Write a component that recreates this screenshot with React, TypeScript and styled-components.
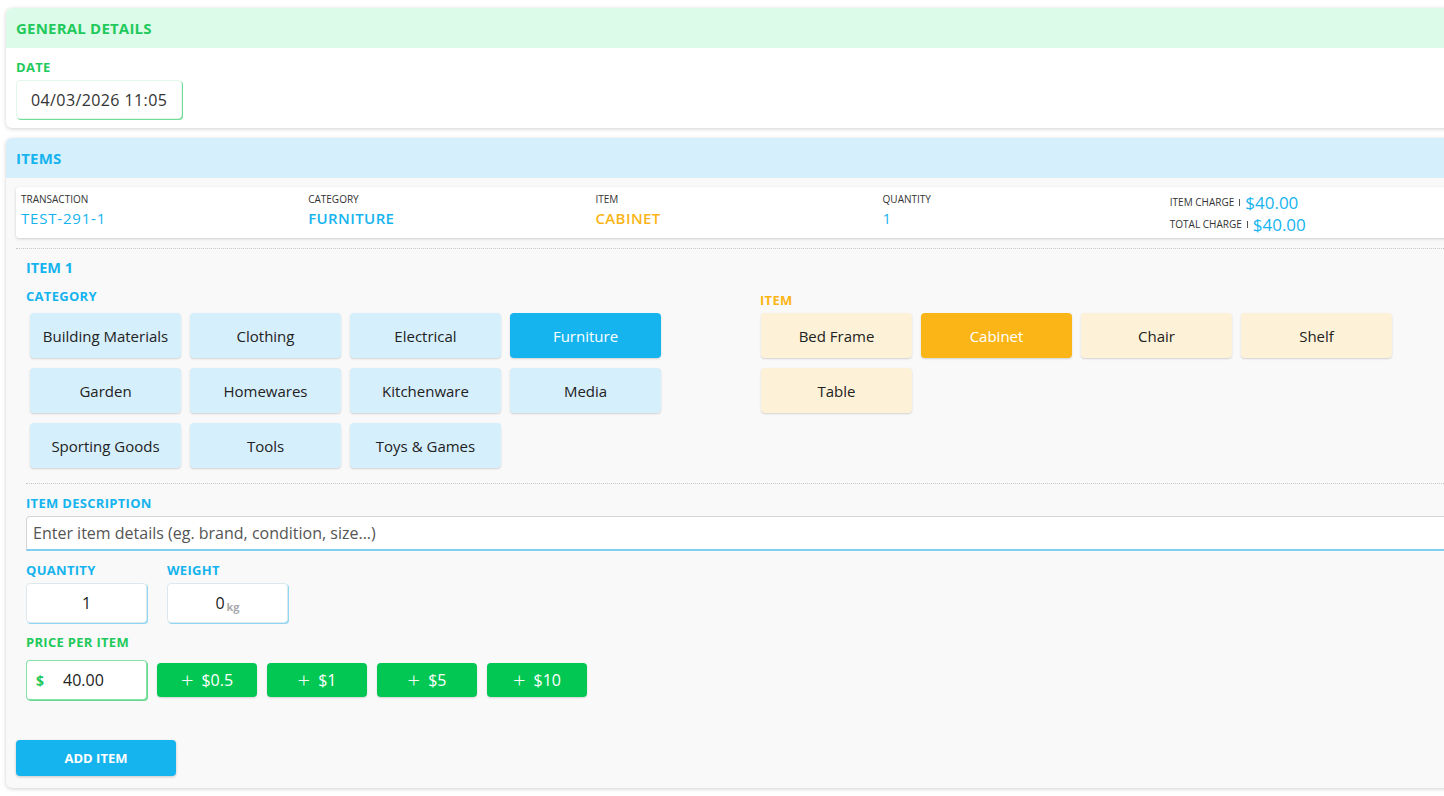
import React from "react";
import styled, { createGlobalStyle } from "styled-components";

const GREEN = "#1fc95b";
const BLUE = "#15b4ef";
const ORANGE = "#fbb516";
const FONT = `"Open Sans", "Noto Sans", sans-serif`;

const Global = createGlobalStyle`
  html, body { margin: 0; padding: 0; background: #fff; overflow: hidden; }
  body { font-family: ${FONT}; color: #222; }
  * { box-sizing: border-box; }
`;

const Page = styled.div`
  width: 1472px;
  padding: 8px 0 8px 6px;
  display: flex;
  flex-direction: column;
  gap: 10px;
`;

const Card = styled.section<{ $bg?: string }>`
  width: 1466px;
  background: ${(p) => p.$bg || "#fff"};
  border-radius: 6px;
  box-shadow: 0 1px 4px rgba(0, 0, 0, 0.18);
  overflow: hidden;
`;

const CardHeader = styled.div<{ $bg: string; $color: string }>`
  height: 40px;
  background: ${(p) => p.$bg};
  color: ${(p) => p.$color};
  display: flex;
  align-items: center;
  padding: 0 10px;
  font-size: 15px;
  font-weight: 700;
  letter-spacing: 0.2px;
`;

const CardBody = styled.div`
  padding: 10px 10px 9px;
`;

const Label = styled.div<{ $color: string; $mt?: number }>`
  color: ${(p) => p.$color};
  font-size: 13px;
  font-weight: 700;
  line-height: 18px;
  letter-spacing: 0.3px;
  text-transform: uppercase;
  margin-top: ${(p) => p.$mt || 0}px;
`;

const DateBox = styled.div`
  margin-top: 4px;
  width: 166px;
  height: 39px;
  display: flex;
  align-items: center;
  padding-left: 14px;
  font-size: 16px;
  letter-spacing: 0.4px;
  color: #333;
  background: #fff;
  border: 1px solid #e2f7e9;
  border-radius: 4px;
  box-shadow: 1px 1px 0 ${GREEN}a0;
`;

const ItemsBody = styled.div`
  padding: 9px 10px 12px;
  display: flex;
  flex-direction: column;
`;

const Summary = styled.div`
  background: #fff;
  border-radius: 3px;
  box-shadow: 0 1px 3px rgba(0, 0, 0, 0.18);
  display: grid;
  grid-template-columns: repeat(5, 1fr);
  padding: 6px 5px 0;
  height: 51px;
  margin-bottom: 10px;
`;

const SumCol = styled.div`
  display: flex;
  flex-direction: column;
  gap: 1px;
`;

const ChargeCol = styled.div`
  display: flex;
  flex-direction: column;
  margin-top: -2px;
`;

const SumLabel = styled.div`
  font-size: 10px;
  color: #333;
  text-transform: uppercase;
  line-height: 12px;
`;

const SumValue = styled.div<{ $color: string; $bold?: boolean }>`
  font-size: 15px;
  color: ${(p) => p.$color};
  font-weight: ${(p) => (p.$bold ? 600 : 400)};
  line-height: 24px;
  letter-spacing: ${(p) => (p.$bold ? 0.4 : 0.8)}px;
`;

const ChargeRow = styled.div`
  display: flex;
  align-items: center;
  gap: 4px;
  height: 22px;
  font-size: 10px;
  color: #333;
  text-transform: uppercase;
`;

const ChargeSep = styled.span`
  display: inline-block;
  width: 1px;
  height: 7px;
  background: #555;
  margin: 0 1px;
`;

const ChargeVal = styled.span`
  font-size: 17px;
  color: ${BLUE};
`;

const Dotted = styled.div`
  border-top: 1px dotted #c8c8c8;
`;

const ItemSection = styled.div`
  padding: 9px 10px 0;
  display: flex;
  flex-direction: column;
`;

const ItemTitle = styled.div`
  color: ${BLUE};
  font-size: 14.5px;
  font-weight: 700;
  line-height: 20px;
`;

const Pickers = styled.div`
  display: grid;
  grid-template-columns: 734px 1fr;
  margin-top: 9px;
  padding-bottom: 15px;
`;

const PickCol = styled.div<{ $offset?: number }>`
  display: flex;
  flex-direction: column;
  padding-top: ${(p) => p.$offset || 0}px;
`;

const BtnGrid = styled.div<{ $mt: number; $pl: number }>`
  display: grid;
  grid-template-columns: repeat(4, 151px);
  gap: 10px 9px;
  margin-top: ${(p) => p.$mt}px;
  padding-left: ${(p) => p.$pl}px;
`;

const Choice = styled.button<{ $bg: string; $active: boolean; $activeBg: string }>`
  height: 45px;
  border: none;
  border-radius: 4px;
  font-family: ${FONT};
  font-size: 15px;
  background: ${(p) => (p.$active ? p.$activeBg : p.$bg)};
  color: ${(p) => (p.$active ? "#fff" : "#222")};
  box-shadow: 0 1px 2px rgba(0, 0, 0, 0.16);
  cursor: pointer;
  padding: 0;
`;

const Field = styled.div<{ $mt?: number }>`
  display: flex;
  flex-direction: column;
  margin-top: ${(p) => p.$mt || 0}px;
`;

const DescInput = styled.input`
  margin-top: 4px;
  width: 100%;
  height: 35px;
  border: 1px solid #d4d4d4;
  border-bottom: 2px solid #7fcff0;
  border-radius: 4px 4px 0 0;
  padding: 0 6px;
  font-family: ${FONT};
  font-size: 16px;
  color: #444;
  background: #fff;
  &::placeholder { color: #555; }
`;

const Row = styled.div<{ $gap: number; $mt?: number }>`
  display: flex;
  gap: ${(p) => p.$gap}px;
  margin-top: ${(p) => p.$mt || 0}px;
  align-items: flex-start;
`;

const NumBox = styled.div<{ $accent: string; $justify?: string }>`
  margin-top: 4px;
  width: 121px;
  height: 40px;
  background: #fff;
  border: 1px solid #dde8ee;
  border-radius: 4px;
  box-shadow: 1px 1px 0 ${(p) => p.$accent};
  display: flex;
  align-items: center;
  justify-content: ${(p) => p.$justify || "center"};
  font-size: 16px;
  color: #222;
  gap: 2px;
`;

const Unit = styled.span`
  font-size: 11px;
  font-weight: 700;
  color: #aaa;
  margin-top: 6px;
`;

const PriceBox = styled(NumBox)`
  margin-top: 0;
  border-color: ${GREEN}88;
  padding-left: 9px;
  gap: 0;
`;

const Dollar = styled.span`
  color: ${GREEN};
  font-weight: 700;
  font-size: 14px;
  width: 27px;
`;

const AddBtn = styled.button`
  margin-top: 3px;
  width: 100px;
  height: 34px;
  border: none;
  border-radius: 4px;
  background: #02c853;
  color: #fff;
  font-family: ${FONT};
  font-size: 16px;
  display: flex;
  align-items: center;
  justify-content: center;
  gap: 8px;
  box-shadow: 0 1px 2px rgba(0, 0, 0, 0.15);
  padding: 0;
`;

const Plus = styled.span`
  font-size: 22px;
  font-weight: 300;
  line-height: 1;
  margin-top: -3px;
`;

const Primary = styled.button`
  margin-top: 40px;
  width: 160px;
  height: 36px;
  border: none;
  border-radius: 4px;
  background: ${BLUE};
  color: #fff;
  font-family: ${FONT};
  font-weight: 700;
  font-size: 13px;
  box-shadow: 0 1px 3px rgba(0, 0, 0, 0.2);
`;

const categories = [
  "Building Materials", "Clothing", "Electrical", "Furniture",
  "Garden", "Homewares", "Kitchenware", "Media",
  "Sporting Goods", "Tools", "Toys & Games",
];
const items = ["Bed Frame", "Cabinet", "Chair", "Shelf", "Table"];

export default function App() {
  return (
    <>
      <Global />
      <Page>
        <Card>
          <CardHeader $bg="#dcfbe8" $color={GREEN}>GENERAL DETAILS</CardHeader>
          <CardBody>
            <Label $color={GREEN}>Date</Label>
            <DateBox>04/03/2026 11:05</DateBox>
          </CardBody>
        </Card>

        <Card $bg="#f9f9f9">
          <CardHeader $bg="#d6effc" $color={BLUE}>ITEMS</CardHeader>
          <ItemsBody>
            <Summary>
              <SumCol>
                <SumLabel>Transaction</SumLabel>
                <SumValue $color={BLUE}>TEST-291-1</SumValue>
              </SumCol>
              <SumCol>
                <SumLabel>Category</SumLabel>
                <SumValue $color={BLUE} $bold>FURNITURE</SumValue>
              </SumCol>
              <SumCol>
                <SumLabel>Item</SumLabel>
                <SumValue $color={ORANGE} $bold>CABINET</SumValue>
              </SumCol>
              <SumCol>
                <SumLabel>Quantity</SumLabel>
                <SumValue $color={BLUE}>1</SumValue>
              </SumCol>
              <ChargeCol>
                <ChargeRow>Item charge <ChargeSep /> <ChargeVal>$40.00</ChargeVal></ChargeRow>
                <ChargeRow>Total charge <ChargeSep /> <ChargeVal>$40.00</ChargeVal></ChargeRow>
              </ChargeCol>
            </Summary>
            <Dotted />
            <ItemSection>
              <ItemTitle>ITEM 1</ItemTitle>
              <Pickers>
                <PickCol>
                  <Label $color={BLUE}>Category</Label>
                  <BtnGrid $mt={8} $pl={4}>
                    {categories.map((c) => (
                      <Choice key={c} $bg="#d6effc" $activeBg={BLUE} $active={c === "Furniture"}>{c}</Choice>
                    ))}
                  </BtnGrid>
                </PickCol>
                <PickCol $offset={4}>
                  <Label $color={ORANGE}>Item</Label>
                  <BtnGrid $mt={4} $pl={1}>
                    {items.map((c) => (
                      <Choice key={c} $bg="#fdf2d7" $activeBg={ORANGE} $active={c === "Cabinet"}>{c}</Choice>
                    ))}
                  </BtnGrid>
                </PickCol>
              </Pickers>
              <Dotted />
              <Field $mt={10}>
                <Label $color={BLUE}>Item description</Label>
                <DescInput placeholder="Enter item details (eg. brand, condition, size...)" />
              </Field>
              <Row $gap={20} $mt={10}>
                <Field>
                  <Label $color={BLUE}>Quantity</Label>
                  <NumBox $accent="#8fd6f3">1</NumBox>
                </Field>
                <Field>
                  <Label $color={BLUE}>Weight</Label>
                  <NumBox $accent="#8fd6f3">0<Unit>kg</Unit></NumBox>
                </Field>
              </Row>
              <Field $mt={10}>
                <Label $color={GREEN}>Price per item</Label>
                <Row $gap={10} $mt={9}>
                  <PriceBox $accent={`${GREEN}aa`} $justify="flex-start">
                    <Dollar>$</Dollar>40.00
                  </PriceBox>
                  {["$0.5", "$1", "$5", "$10"].map((v) => (
                    <AddBtn key={v}><Plus>+</Plus>{v}</AddBtn>
                  ))}
                </Row>
              </Field>
            </ItemSection>
            <div>
              <Primary>ADD ITEM</Primary>
            </div>
          </ItemsBody>
        </Card>
      </Page>
    </>
  );
}
